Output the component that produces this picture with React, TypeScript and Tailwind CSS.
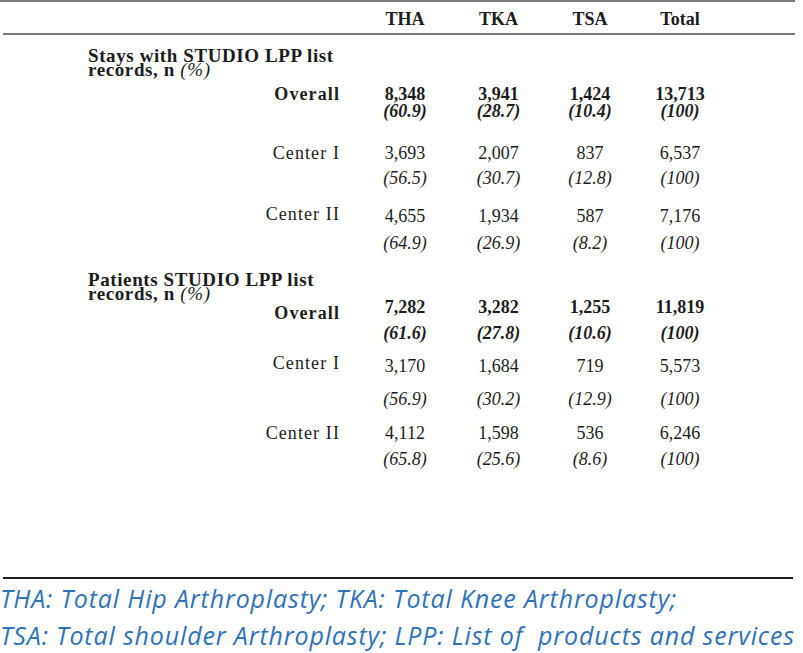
import React from "react"

type Row = {
  label: string
  bold?: boolean
  mt: string
  labelPt: string
  valPt: string
  gap: string
  vals: [string, string][]
}

const serif = { fontFamily: '"Liberation Serif", serif' }

const staysRows: Row[] = [
  {
    label: "Overall",
    bold: true,
    mt: "mt-[8px]",
    labelPt: "pt-0",
    valPt: "pt-0",
    gap: "mt-[-1px]",
    vals: [
      ["8,348", "(60.9)"],
      ["3,941", "(28.7)"],
      ["1,424", "(10.4)"],
      ["13,713", "(100)"],
    ],
  },
  {
    label: "Center I",
    mt: "mt-[24px]",
    labelPt: "pt-0",
    valPt: "pt-0",
    gap: "mt-[7px]",
    vals: [
      ["3,693", "(56.5)"],
      ["2,007", "(30.7)"],
      ["837", "(12.8)"],
      ["6,537", "(100)"],
    ],
  },
  {
    label: "Center II",
    mt: "mt-[18px]",
    labelPt: "pt-0",
    valPt: "pt-[2px]",
    gap: "mt-[9px]",
    vals: [
      ["4,655", "(64.9)"],
      ["1,934", "(26.9)"],
      ["587", "(8.2)"],
      ["7,176", "(100)"],
    ],
  },
]

const patientRows: Row[] = [
  {
    label: "Overall",
    bold: true,
    mt: "mt-[-3px]",
    labelPt: "pt-[6px]",
    valPt: "pt-0",
    gap: "mt-[8px]",
    vals: [
      ["7,282", "(61.6)"],
      ["3,282", "(27.8)"],
      ["1,255", "(10.6)"],
      ["11,819", "(100)"],
    ],
  },
  {
    label: "Center I",
    mt: "mt-[12px]",
    labelPt: "pt-0",
    valPt: "pt-[3px]",
    gap: "mt-[15px]",
    vals: [
      ["3,170", "(56.9)"],
      ["1,684", "(30.2)"],
      ["719", "(12.9)"],
      ["5,573", "(100)"],
    ],
  },
  {
    label: "Center II",
    mt: "mt-[16px]",
    labelPt: "pt-0",
    valPt: "pt-0",
    gap: "mt-[8px]",
    vals: [
      ["4,112", "(65.8)"],
      ["1,598", "(25.6)"],
      ["536", "(8.6)"],
      ["6,246", "(100)"],
    ],
  },
]

function DataRow({ row }: { row: Row }) {
  return (
    <div className={`grid grid-cols-[358px_94px_93px_90px_90px] ${row.mt}`}>
      <div
        className={`${row.labelPt} pr-[18px] text-right text-[18px] leading-[18px] tracking-[1.1px] ${
          row.bold ? "font-bold" : ""
        }`}
      >
        {row.label}
      </div>
      {row.vals.map(([n, p], i) => (
        <div key={i} className={`${row.valPt} flex flex-col items-center text-[18px] leading-[18px] ${row.bold ? "font-bold" : ""}`}>
          <span>{n}</span>
          <span className={`${row.gap} italic`}>{p}</span>
        </div>
      ))}
    </div>
  )
}

function SectionTitle({ first, second, mt }: { first: string; second: React.ReactNode; mt: string }) {
  return (
    <div className={`${mt} pl-[88px] text-[19px] leading-[14px] font-bold tracking-[0.6px]`}>
      <div>{first}</div>
      <div>{second}</div>
    </div>
  )
}

export default function App() {
  return (
    <div className="w-[803px] h-[653px] bg-white text-[#1c1c1c] overflow-hidden" style={serif}>
      <div className="w-[795px] h-[2px] bg-[#7a7a7a]" />

      {/* header */}
      <div className="grid grid-cols-[358px_94px_93px_90px_90px] pt-[8px] pb-[5px] text-[18px] leading-[18px] font-bold">
        <div />
        <div className="text-center">THA</div>
        <div className="text-center">TKA</div>
        <div className="text-center">TSA</div>
        <div className="text-center">Total</div>
      </div>
      <div className="ml-[3px] w-[792px] h-[2px] bg-[#7a7a7a]" />

      <SectionTitle
        mt="mt-[14px]"
        first="Stays with STUDIO LPP list"
        second={
          <>
            records, n <span className="italic font-normal">(%)</span>
          </>
        }
      />
      {staysRows.map((r, i) => (
        <DataRow key={i} row={r} />
      ))}

      <SectionTitle
        mt="mt-[21px]"
        first="Patients STUDIO LPP list"
        second={
          <>
            records, n <span className="italic font-normal">(%)</span>
          </>
        }
      />
      {patientRows.map((r, i) => (
        <DataRow key={i} row={r} />
      ))}

      {/* footnote */}
      <div className="mt-[109px] ml-[3px] w-[790px] h-[2px] bg-[#1a1a1a]" />
      <div
        className="pt-[1px] text-[25px] leading-[37px] italic tracking-[0.85px] whitespace-nowrap text-[#2f72b8]"
        style={{ fontFamily: '"Open Sans", sans-serif' }}
      >
        <div>THA: Total Hip Arthroplasty; TKA: Total Knee Arthroplasty;</div>
        <div>TSA: Total shoulder Arthroplasty; LPP: List of&nbsp; products and services</div>
      </div>
    </div>
  )
}
